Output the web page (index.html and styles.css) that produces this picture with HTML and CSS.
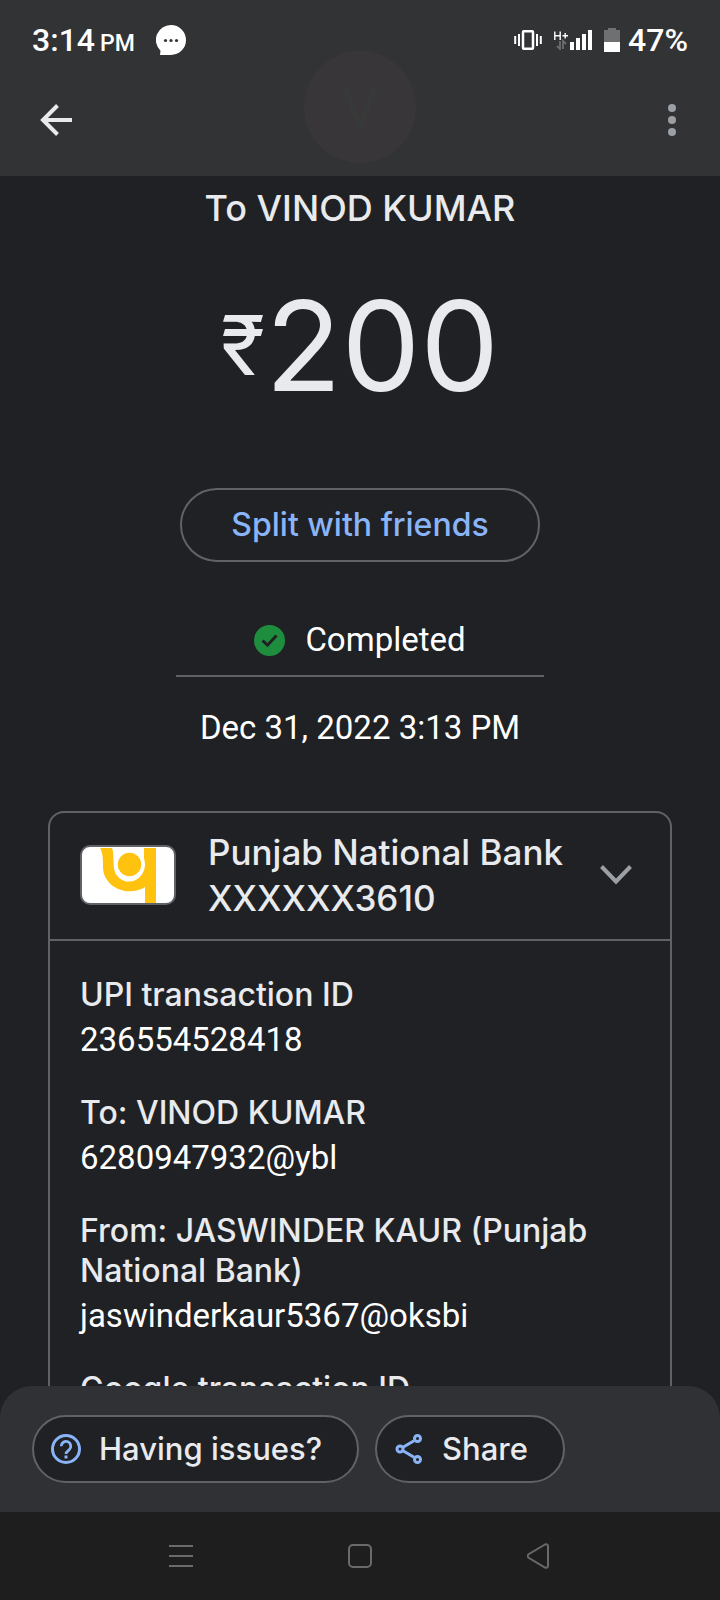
FILE: index.html
```html
<!DOCTYPE html>
<html lang="en">
<head>
<meta charset="utf-8">
<meta name="viewport" content="width=device-width, initial-scale=1">
<title>Transaction details</title>
<link rel="stylesheet" href="styles.css">
</head>
<body>
<div class="screen">
  <header class="top">
    <div class="avatar" aria-hidden="true">V</div>
    <div class="status">
      <span class="clock">3:14</span><span class="meridiem">PM</span>
      <svg class="bubble" width="30" height="30" viewBox="0 0 30 30" aria-hidden="true">
        <path fill="#fff" d="M15 0a15 15 0 0 1 0 30H4l.5-4.200A15 15 0 0 1 15 0z"/>
        <circle cx="9.500" cy="15.500" r="1.600" fill="#323334"/><circle cx="15" cy="15.500" r="1.600" fill="#323334"/><circle cx="20.500" cy="15.500" r="1.600" fill="#323334"/>
      </svg>
      <svg class="vibrate" width="28" height="20" viewBox="0 0 28 20" aria-hidden="true">
        <rect x="9" y="1.200" width="10" height="17.600" rx="1" fill="none" stroke="#fff" stroke-width="2.500"/>
        <path d="M1.200 6v8M5 4v12M23 4v12M26.800 6v8" stroke="#fff" stroke-width="2"/>
      </svg>
      <svg class="signal" width="38" height="20" viewBox="0 0 38 20" aria-hidden="true">
        <path d="M.8 1.500v8.500M6.200 1.500v8.500M.8 5.800h5.400M8.500 5.800h5.500M11.200 3v5.600" stroke="#fff" stroke-width="1.400" fill="none"/>
        <path d="M6 11v8l-3-3M9 19v-8l3 3" stroke="#6c6d6e" stroke-width="1.800" fill="none"/>
        <path d="M16 12h4v8h-4zM22 8h4v12h-4zM28 4h4v16h-4zM34 0h4v20h-4z" fill="#fff"/>
      </svg>
      <svg class="battery" width="16" height="24" viewBox="0 0 16 24" aria-hidden="true">
        <path d="M0 2h4V0h8v2h4v12H0z" fill="#6f7071"/><path d="M0 14h16v10H0z" fill="#fff"/>
      </svg>
      <span class="percent">47%</span>
    </div>
    <div class="appbar">
      <button class="icon-button" aria-label="Back">
        <svg width="32" height="32" viewBox="0 0 32 32"><path d="M32 16H3M17.500 1.500 3 16l14.500 14.500" fill="none" stroke="#e8eaed" stroke-width="4"/></svg>
      </button>
      <button class="icon-button" aria-label="More options">
        <svg width="8" height="32" viewBox="0 0 8 32" fill="#9aa0a6"><circle cx="4" cy="4" r="4"/><circle cx="4" cy="16" r="4"/><circle cx="4" cy="28" r="4"/></svg>
      </button>
    </div>
  </header>

  <main class="content">
    <h1 class="payee">To VINOD KUMAR</h1>
    <p class="amount"><span class="currency">₹</span>200</p>
    <button class="split">Split with friends</button>
    <p class="state">
      <svg width="31" height="31" viewBox="0 0 31 31" aria-hidden="true"><circle cx="15.500" cy="15.500" r="15.500" fill="#1e8e3e"/><path d="m8.500 15.500 5 4.700 9-9.700" fill="none" stroke="#202124" stroke-width="3"/></svg>
      Completed
    </p>
    <p class="date">Dec 31, 2022 3:13 PM</p>

    <section class="card">
      <button class="bank">
        <svg class="logo" width="96" height="60" viewBox="0 0 96 60" aria-hidden="true">
          <rect x="1" y="1" width="94" height="58" rx="9" fill="#fff"/>
          <path fill="#ffc20e" d="M20 3h12c2 5 1 12 2 20a15 15 0 0 0 30-3V3h12v55H65V42C48 53 23 42 23 22c0-7 0-14-3-19z"/>
          <circle cx="49.500" cy="19.500" r="15.500" fill="#fff"/><circle cx="49.500" cy="19.500" r="11.700" fill="#ffc20e"/>
          <rect x="1" y="1" width="94" height="58" rx="9" fill="none" stroke="#5f6368" stroke-width="2"/>
        </svg>
        <span class="bank-name">Punjab National Bank XXXXXX3610</span>
        <svg class="chevron" width="32" height="20" viewBox="0 0 32 20" aria-hidden="true"><path d="M1.500 1.500 16 16.500l14.500-15" fill="none" stroke="#9aa0a6" stroke-width="4"/></svg>
      </button>
      <dl class="details">
        <div><dt>UPI transaction ID</dt><dd>236554528418</dd></div>
        <div><dt>To: VINOD KUMAR</dt><dd>6280947932@ybl</dd></div>
        <div><dt>From: JASWINDER KAUR (Punjab National Bank)</dt><dd>jaswinderkaur5367@oksbi</dd></div>
        <div><dt>Google transaction ID</dt></div>
      </dl>
    </section>
  </main>

  <footer class="actions">
    <button class="pill">
      <svg width="30" height="30" viewBox="0 0 30 30" fill="none" stroke="#8ab4f8" aria-hidden="true"><circle cx="15" cy="15" r="13.500" stroke-width="3"/><path d="M10.200 12.300a4.800 4.800 0 1 1 8 3.500c-1.900 1.500-3.200 2.200-3.200 4.200" stroke-width="2.800"/><path d="M15 21.500v3" stroke-width="3"/></svg>
      Having issues?
    </button>
    <button class="pill">
      <svg width="30" height="30" viewBox="0 0 30 30" fill="none" stroke="#8ab4f8" stroke-width="3" aria-hidden="true"><path d="m9 13.300 11-6.600M9 16.700l11 6.600"/><circle cx="6" cy="15" r="3"/><circle cx="23.500" cy="4.500" r="3"/><circle cx="23.500" cy="25.500" r="3"/></svg>
      Share
    </button>
  </footer>

  <nav class="system" aria-label="System navigation">
    <button class="icon-button" aria-label="Recent apps"><svg width="26" height="26" viewBox="0 0 26 26"><path d="M1 3h24M1 13h24M1 23h24" stroke="#6a6a6b" stroke-width="2"/></svg></button>
    <button class="icon-button" aria-label="Home"><svg width="26" height="26" viewBox="0 0 26 26"><rect x="2" y="2" width="22" height="22" rx="4" fill="none" stroke="#6a6a6b" stroke-width="2"/></svg></button>
    <button class="icon-button" aria-label="Back"><svg width="26" height="26" viewBox="0 0 26 26"><path d="M18 1.500 2 11q-3 2 0 4l16 9.500q3 1 3-2v-19q0-3-3-2z" fill="none" stroke="#6a6a6b" stroke-width="2"/></svg></button>
  </nav>
</div>
</body>
</html>
```
FILE: styles.css
```css
:root {
  --bg: #202124;
  --line: #5f6368;
  --text: #e8eaed;
  --display: Inter, sans-serif;
  --body: Roboto, sans-serif;
}

* { box-sizing: border-box; }

body {
  margin: 0;
  background: var(--bg);
  color: var(--text);
  font-family: var(--body);
}

button {
  padding: 0;
  border: 0;
  background: none;
  color: inherit;
  font: inherit;
}

h1, p, dl, dd { margin: 0; }

svg { display: block; flex: none; }

.screen {
  display: flex;
  flex-direction: column;
  height: 100vh;
}

.top {
  position: relative;
  background: #323334;
}

.avatar {
  position: absolute;
  top: 51px;
  left: calc(50% - 56px);
  width: 112px;
  height: 112px;
  border-radius: 50%;
  background: #393639;
  color: #373a39;
  font: 400 56px/112px var(--display);
  text-align: center;
}

.status {
  position: relative;
  display: flex;
  align-items: center;
  height: 80px;
  padding: 0 32px;
  color: #fff;
  font-size: 32px;
  font-weight: 500;
}

.clock, .meridiem, .percent { line-height: 40px; }
.meridiem {
  align-self: flex-end;
  margin: 0 0 16px 5px;
  font-size: 23px;
}
.bubble { margin-left: 21px; }
.vibrate { margin-left: auto; }
.signal { margin-left: 12px; }
.battery { margin: 0 8px 0 12px; }

.appbar {
  position: relative;
  display: flex;
  align-items: center;
  justify-content: space-between;
  height: 96px;
  padding: 0 44px 16px 40px;
}

.icon-button {
  display: grid;
  place-items: center;
}

.content {
  display: flex;
  flex: 1;
  flex-direction: column;
  align-items: center;
  min-height: 0;
  padding: 10px 48px 0;
  overflow: hidden;
}

.payee {
  font: 500 36px/44px var(--display);
}

.amount {
  display: flex;
  margin-top: 56px;
  font: 400 125px/120px var(--display);
}

.currency {
  font-size: 82px;
}

.split {
  flex: none;
  width: 360px;
  height: 74px;
  margin-top: 82px;
  border: 2px solid var(--line);
  border-radius: 37px;
  color: #8ab4f8;
  font: 500 32px/40px var(--display);
}

.state {
  display: flex;
  align-items: center;
  justify-content: center;
  gap: 20px;
  width: 368px;
  margin-top: 58px;
  padding-bottom: 15px;
  border-bottom: 2px solid var(--line);
  color: #fff;
  font-size: 33px;
  line-height: 40px;
}

.date {
  margin-top: 31px;
  color: #fff;
  font-size: 33px;
  line-height: 40px;
}

.card {
  flex: none;
  width: 100%;
  margin-top: 63px;
  border: 2px solid var(--line);
  border-radius: 16px;
}

.bank {
  display: flex;
  align-items: center;
  width: 100%;
  padding: 16px 38px 18px 30px;
  border-bottom: 2px solid var(--line);
  text-align: left;
}

.bank-name {
  flex: 1;
  padding-left: 32px;
  font: 500 35px/46px var(--display);
}

.details {
  display: flex;
  flex-direction: column;
  gap: 32px;
  padding: 34px 30px;
}

dt { font: 500 32px/40px var(--display); }

dd {
  margin-top: 4px;
  color: #fff;
  font-size: 33px;
  line-height: 42px;
}

.actions {
  display: flex;
  gap: 16px;
  padding: 29px 32px;
  border-radius: 32px 32px 0 0;
  background: #303134;
}

.pill {
  display: flex;
  align-items: center;
  gap: 18px;
  height: 68px;
  padding: 0 35px 0 17px;
  border: 2px solid var(--line);
  border-radius: 34px;
  background: var(--bg);
  font: 500 31px/40px var(--display);
}

.system {
  display: flex;
  align-items: center;
  justify-content: space-evenly;
  height: 88px;
  padding: 0 14px;
  background: #1e1e1f;
}
```
